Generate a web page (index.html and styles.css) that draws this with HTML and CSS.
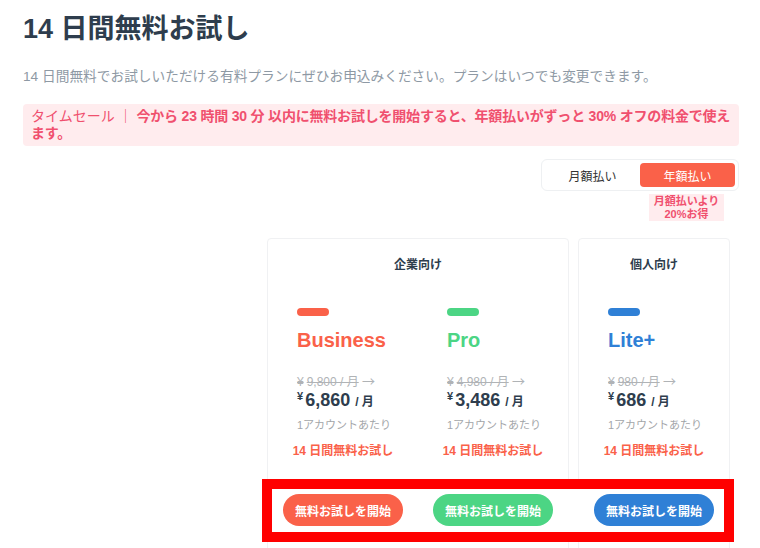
FILE: index.html
```html
<!DOCTYPE html>
<html lang="ja">
<head>
  <meta charset="UTF-8">
  <meta name="viewport" content="width=device-width, initial-scale=1.0">
  <title>14 日間無料お試し</title>
  <link rel="stylesheet" href="styles.css">
</head>
<body>
  <div class="page">
    <h1 class="title">14 日間無料お試し</h1>
    <p class="lead">14 日間無料でお試しいただける有料プランにぜひお申込みください。プランはいつでも変更できます。</p>

    <div class="sale">
      <span class="sale-label">タイムセール ｜ </span><strong>今から 23 時間 30 分 以内に無料お試しを開始すると、年額払いがずっと 30% オフの料金で使えます。</strong>
    </div>

    <div class="billing">
      <div class="toggle">
        <button class="toggle-btn">月額払い</button>
        <button class="toggle-btn active">年額払い</button>
      </div>
      <div class="save">月額払いより<br>20%お得</div>
    </div>

    <div class="plans">
      <div class="card card-wide">
        <div class="card-head">企業向け</div>
        <div class="card-cols">
          <div class="plan business">
            <div class="bar"></div>
            <div class="name">Business</div>
            <div class="old"><s><span class="old-yen">¥</span>9,800 / 月</s> <span class="arrow">→</span></div>
            <div class="price"><span class="yen">¥</span>6,860 <span class="unit">/ 月</span></div>
            <div class="per">1アカウントあたり</div>
            <div class="trial">14 日間無料お試し</div>
            <button class="start">無料お試しを開始</button>
          </div>
          <div class="plan pro">
            <div class="bar"></div>
            <div class="name">Pro</div>
            <div class="old"><s><span class="old-yen">¥</span>4,980 / 月</s> <span class="arrow">→</span></div>
            <div class="price"><span class="yen">¥</span>3,486 <span class="unit">/ 月</span></div>
            <div class="per">1アカウントあたり</div>
            <div class="trial">14 日間無料お試し</div>
            <button class="start">無料お試しを開始</button>
          </div>
        </div>
      </div>
      <div class="card">
        <div class="card-head">個人向け</div>
        <div class="card-cols">
          <div class="plan lite">
            <div class="bar"></div>
            <div class="name">Lite+</div>
            <div class="old"><s><span class="old-yen">¥</span>980 / 月</s> <span class="arrow">→</span></div>
            <div class="price"><span class="yen">¥</span>686 <span class="unit">/ 月</span></div>
            <div class="per">1アカウントあたり</div>
            <div class="trial">14 日間無料お試し</div>
            <button class="start">無料お試しを開始</button>
          </div>
        </div>
      </div>
    </div>

    <div class="highlight"></div>
  </div>
</body>
</html>
```

FILE: styles.css
```css
:root {
  --text-dark: #2e3d4d;
  --text-grey: #8e99a4;
  --pink: #f0506e;
  --pink-bg: #ffecee;
  --orange: #fa6149;
  --green: #4cd584;
  --blue: #2f80d6;
}
* { box-sizing: border-box; margin: 0; padding: 0; }
html, body { overflow: hidden; }
body {
  font-family: "Liberation Sans", "Noto Sans CJK JP", sans-serif;
  background: #fff;
  color: var(--text-dark);
  width: 760px;
  height: 548px;
}
.page {
  position: relative;
  padding: 12px 21px 0 23px;
}
.title {
  font-size: 27px;
  line-height: 34px;
  font-weight: bold;
  color: var(--text-dark);
}
.lead {
  margin-top: 21px;
  font-size: 13.7px;
  line-height: 20px;
  color: var(--text-grey);
}
.sale {
  margin-top: 17px;
  background: var(--pink-bg);
  color: var(--pink);
  border-radius: 4px;
  padding: 4px 8px;
  font-size: 14px;
  line-height: 17px;
}
.sale strong {
  font-weight: bold;
  letter-spacing: -0.2px;
}

.billing {
  margin-top: 13px;
  display: flex;
  flex-direction: column;
  align-items: flex-end;
}
.toggle {
  display: flex;
  padding: 3px;
  border: 1px solid #eef0f2;
  border-radius: 6px;
  background: #fff;
}
.toggle-btn {
  width: 95px;
  height: 24px;
  border: none;
  border-radius: 4px;
  background: none;
  font-family: inherit;
  font-size: 12px;
  color: #333;
}
.toggle-btn.active {
  background: var(--orange);
  color: #fff;
}
.save {
  margin-top: 3px;
  margin-right: 15px;
  width: 75px;
  padding: 1px 0;
  background: var(--pink-bg);
  color: var(--pink);
  font-size: 11px;
  line-height: 12.5px;
  font-weight: bold;
  text-align: center;
}

.plans {
  margin-top: 17px;
  margin-left: 244px;
  display: flex;
  gap: 9px;
}
.card {
  width: 152px;
  height: 340px;
  border: 1px solid #f0f1f3;
  border-radius: 4px;
}
.card-wide { width: 302px; }
.card-head {
  padding-top: 18px;
  font-size: 12px;
  line-height: 16px;
  font-weight: bold;
  text-align: center;
  color: var(--text-dark);
}
.card-cols { display: flex; }
.plan {
  width: 150px;
  padding-top: 35px;
  padding-left: 29px;
  display: flex;
  flex-direction: column;
  align-items: flex-start;
}
.bar {
  width: 32px;
  height: 8px;
  border-radius: 4px;
}
.name {
  margin-top: 12px;
  font-size: 20px;
  line-height: 24px;
  font-weight: bold;
}
.old {
  margin-top: 21px;
  font-size: 12px;
  line-height: 16px;
  color: #b0b3b6;
}
.old s { text-decoration: line-through; }
.old-yen { margin-right: 3px; }
.arrow {
  font-family: "Noto Sans CJK JP", sans-serif;
  font-size: 13px;
}
.price {
  font-size: 18px;
  line-height: 20px;
  font-weight: bold;
  color: var(--text-dark);
}
.yen {
  position: relative;
  top: -6px;
  font-size: 11px;
  margin-right: 2px;
}
.unit { font-size: 12px; }
.per {
  margin-top: 5px;
  font-size: 11px;
  line-height: 16px;
  color: #a3a6a9;
}
.trial {
  margin-top: 10px;
  margin-left: -29px;
  width: 150px;
  font-size: 12px;
  line-height: 16px;
  font-weight: bold;
  text-align: center;
  color: var(--orange);
}
.start {
  position: relative;
  z-index: 2;
  margin-top: 35px;
  margin-left: -14px;
  width: 120px;
  height: 32px;
  border: none;
  border-radius: 16px;
  font-family: inherit;
  font-size: 12px;
  font-weight: bold;
  color: #fff;
}

.business .bar, .business .start { background: var(--orange); }
.business .name { color: var(--orange); }
.pro .bar, .pro .start { background: var(--green); }
.pro .name { color: var(--green); }
.lite .bar, .lite .start { background: var(--blue); }
.lite .name { color: var(--blue); }

/* annotation box drawn over the buttons */
.highlight {
  position: absolute;
  z-index: 1;
  left: 262px;
  top: 479px;
  width: 472px;
  height: 63px;
  border: 10px solid #ff0000;
  background: #fff;
}
```
